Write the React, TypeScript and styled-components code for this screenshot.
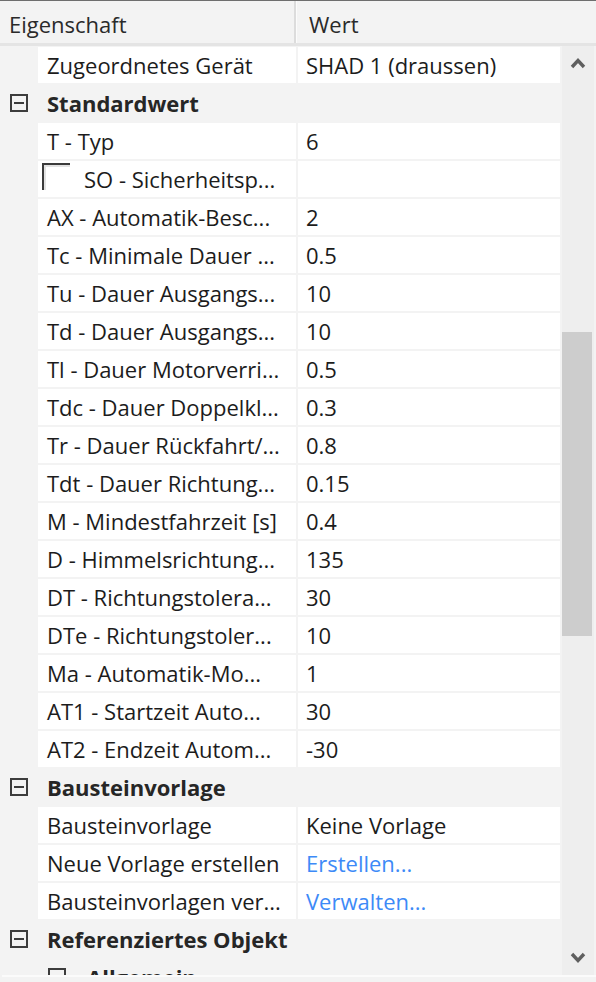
import React from "react";
import styled, { createGlobalStyle } from "styled-components";

const GlobalStyle = createGlobalStyle`
  html, body { margin: 0; padding: 0; background: #f3f3f3; }
  * { box-sizing: border-box; }
`;

const FONT = `"Open Sans", "Noto Sans", "Liberation Sans", sans-serif`;

const Panel = styled.div`
  width: 596px;
  height: 982px;
  display: flex;
  flex-direction: column;
  background: #f3f3f3;
  border-top: 1px solid #6e6e6e;
  font-family: ${FONT};
  font-size: 22px;
  color: #1c1c1c;
  overflow: hidden;
`;

const Header = styled.div`
  display: flex;
  height: 45px;
  flex: none;
  background: #f3f3f3;
  border-bottom: 3px solid #e4e4e4;
`;

const HeaderCell = styled.div<{ $w?: number }>`
  ${(p) => (p.$w ? `width: ${p.$w}px; flex: none;` : "flex: 1;")}
  display: flex;
  align-items: center;
  padding-top: 3px;
  padding-left: ${(p) => (p.$w ? 9 : 12)}px;
  border-right: ${(p) => (p.$w ? "2px solid #dcdcdc" : "none")};
  border-left: ${(p) => (p.$w ? "none" : "1px solid #fbfbfb")};
  color: #2a2a2a;
`;

const Body = styled.div`
  flex: 1;
  display: flex;
  gap: 2px;
  padding-right: 2px;
  min-height: 0;
`;

const Grid = styled.div`
  width: 560px;
  flex: none;
  display: grid;
  grid-template-columns: 38px 260px 262px;
  grid-auto-rows: 36px;
  row-gap: 2px;
  padding-top: 1px;
  overflow: hidden;
  align-content: start;
`;

const Gutter = styled.div`
  display: flex;
  align-items: center;
  padding-left: 10px;
`;

const NameCell = styled.div`
  background: #fff;
  display: flex;
  align-items: center;
  padding-left: 9px;
  margin-right: 2px;
  white-space: nowrap;
  overflow: hidden;
`;

const ValueCell = styled.div<{ $link?: boolean }>`
  background: #fff;
  display: flex;
  align-items: center;
  padding-left: 8px;
  white-space: nowrap;
  overflow: hidden;
  color: ${(p) => (p.$link ? "#3d8af7" : "inherit")};
`;

const CategoryCell = styled.div<{ $indent?: number }>`
  grid-column: 2 / 4;
  display: flex;
  align-items: center;
  gap: 21px;
  padding-left: ${(p) => p.$indent ?? 9}px;
  font-weight: 700;
  color: #262626;
  white-space: nowrap;
`;

const ToggleBox = styled.span`
  width: 18px;
  height: 18px;
  flex: none;
  border: 2px solid #3c3c3c;
  display: flex;
  align-items: center;
  justify-content: center;
  &::after {
    content: "";
    width: 10px;
    height: 2px;
    background: #3c3c3c;
  }
`;

const CheckBox = styled.span`
  width: 28px;
  height: 27px;
  flex: none;
  margin-left: -5px;
  margin-right: 14px;
  align-self: flex-start;
  margin-top: 2px;
  border-top: 2px solid #3a3a3a;
  border-left: 2px solid #3a3a3a;
  box-shadow: inset 2px 2px 0 #e2e2e2;
`;

const ScrollBar = styled.div`
  width: 32px;
  flex: none;
  background: #eeeeee;
  display: flex;
  flex-direction: column;
  align-items: center;
`;

const ArrowBtn = styled.div`
  height: 34px;
  flex: none;
  width: 100%;
  display: flex;
  align-items: center;
  justify-content: center;
`;

const Track = styled.div`
  flex: 1;
  width: 100%;
  display: flex;
  flex-direction: column;
  padding-right: 2px;
`;

const Thumb = styled.div<{ $top: number; $h: number }>`
  margin-top: ${(p) => p.$top}px;
  height: ${(p) => p.$h}px;
  background: #cdcdcd;
`;

const Footer = styled.div`
  height: 7px;
  flex: none;
  margin-left: 2px;
  border-top: 2px solid #fbfbfb;
  background: #f3f3f3;
`;

type Row =
  | { kind: "prop"; name: string; value?: string; link?: boolean; check?: boolean }
  | { kind: "cat"; name: string; indent?: number };

const rows: Row[] = [
  { kind: "prop", name: "Zugeordnetes Gerät", value: "SHAD 1 (draussen)" },
  { kind: "cat", name: "Standardwert" },
  { kind: "prop", name: "T - Typ", value: "6" },
  { kind: "prop", name: "SO - Sicherheitsp...", value: "", check: true },
  { kind: "prop", name: "AX - Automatik-Besc...", value: "2" },
  { kind: "prop", name: "Tc - Minimale Dauer ...", value: "0.5" },
  { kind: "prop", name: "Tu - Dauer Ausgangs...", value: "10" },
  { kind: "prop", name: "Td - Dauer Ausgangs...", value: "10" },
  { kind: "prop", name: "Tl - Dauer Motorverri...", value: "0.5" },
  { kind: "prop", name: "Tdc - Dauer Doppelkl...", value: "0.3" },
  { kind: "prop", name: "Tr - Dauer Rückfahrt/...", value: "0.8" },
  { kind: "prop", name: "Tdt - Dauer Richtung...", value: "0.15" },
  { kind: "prop", name: "M - Mindestfahrzeit [s]", value: "0.4" },
  { kind: "prop", name: "D - Himmelsrichtung...", value: "135" },
  { kind: "prop", name: "DT - Richtungstolera...", value: "30" },
  { kind: "prop", name: "DTe - Richtungstoler...", value: "10" },
  { kind: "prop", name: "Ma - Automatik-Mo...", value: "1" },
  { kind: "prop", name: "AT1 - Startzeit Auto...", value: "30" },
  { kind: "prop", name: "AT2 - Endzeit Autom...", value: "-30" },
  { kind: "cat", name: "Bausteinvorlage" },
  { kind: "prop", name: "Bausteinvorlage", value: "Keine Vorlage" },
  { kind: "prop", name: "Neue Vorlage erstellen", value: "Erstellen...", link: true },
  { kind: "prop", name: "Bausteinvorlagen ver...", value: "Verwalten...", link: true },
  { kind: "cat", name: "Referenziertes Objekt" },
  { kind: "cat", name: "Allgemein", indent: 10 },
];

const Chevron = ({ up }: { up?: boolean }) => (
  <svg width="16" height="12" viewBox="0 0 16 12">
    <polyline
      points={up ? "2,10 8,3.5 14,10" : "2,2 8,8.5 14,2"}
      fill="none"
      stroke="#5f5f5f"
      strokeWidth="3.4"
      strokeLinejoin="miter"
    />
  </svg>
);

export default function App() {
  return (
    <>
      <GlobalStyle />
      <Panel>
        <Header>
          <HeaderCell $w={296}>Eigenschaft</HeaderCell>
          <HeaderCell>Wert</HeaderCell>
        </Header>
        <Body>
          <Grid>
            {rows.map((r, i) =>
              r.kind === "cat" ? (
                r.indent ? (
                  <React.Fragment key={i}>
                    <Gutter />
                    <CategoryCell $indent={r.indent}>
                      <ToggleBox />
                      {r.name}
                    </CategoryCell>
                  </React.Fragment>
                ) : (
                  <React.Fragment key={i}>
                    <Gutter>
                      <ToggleBox />
                    </Gutter>
                    <CategoryCell>{r.name}</CategoryCell>
                  </React.Fragment>
                )
              ) : (
                <React.Fragment key={i}>
                  <Gutter />
                  <NameCell>
                    {r.check && <CheckBox />}
                    {r.name}
                  </NameCell>
                  <ValueCell $link={r.link}>{r.value}</ValueCell>
                </React.Fragment>
              )
            )}
          </Grid>
          <ScrollBar>
            <ArrowBtn>
              <Chevron up />
            </ArrowBtn>
            <Track>
              <Thumb $top={252} $h={304} />
            </Track>
            <ArrowBtn>
              <Chevron />
            </ArrowBtn>
          </ScrollBar>
        </Body>
        <Footer />
      </Panel>
    </>
  );
}
